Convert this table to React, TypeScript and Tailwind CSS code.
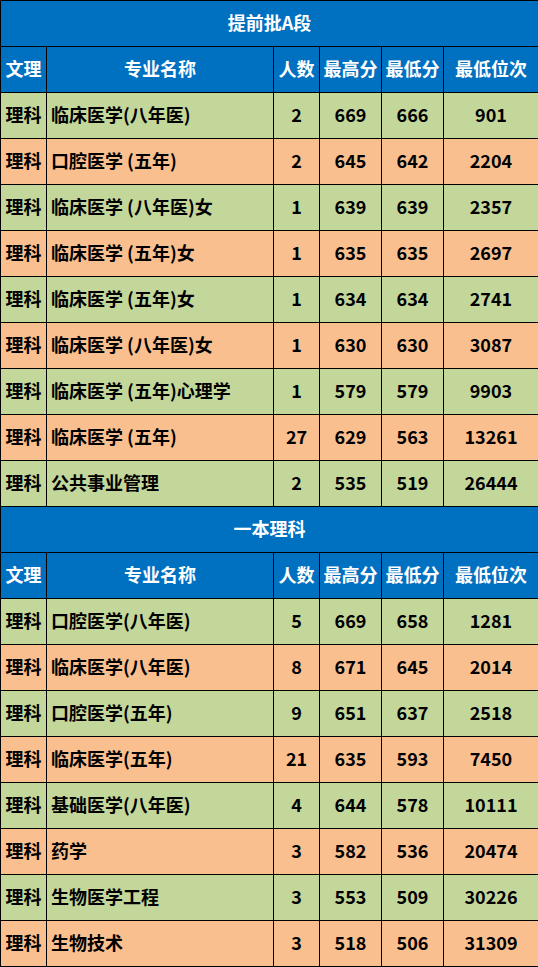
import React from "react";

type Row = [string, string, string, string, string, string];

const sections: { title: string; rows: Row[] }[] = [
  {
    title: "提前批A段",
    rows: [
      ["理科", "临床医学(八年医)", "2", "669", "666", "901"],
      ["理科", "口腔医学 (五年)", "2", "645", "642", "2204"],
      ["理科", "临床医学 (八年医)女", "1", "639", "639", "2357"],
      ["理科", "临床医学 (五年)女", "1", "635", "635", "2697"],
      ["理科", "临床医学 (五年)女", "1", "634", "634", "2741"],
      ["理科", "临床医学 (八年医)女", "1", "630", "630", "3087"],
      ["理科", "临床医学 (五年)心理学", "1", "579", "579", "9903"],
      ["理科", "临床医学 (五年)", "27", "629", "563", "13261"],
      ["理科", "公共事业管理", "2", "535", "519", "26444"],
    ],
  },
  {
    title: "一本理科",
    rows: [
      ["理科", "口腔医学(八年医)", "5", "669", "658", "1281"],
      ["理科", "临床医学(八年医)", "8", "671", "645", "2014"],
      ["理科", "口腔医学(五年)", "9", "651", "637", "2518"],
      ["理科", "临床医学(五年)", "21", "635", "593", "7450"],
      ["理科", "基础医学(八年医)", "4", "644", "578", "10111"],
      ["理科", "药学", "3", "582", "536", "20474"],
      ["理科", "生物医学工程", "3", "553", "509", "30226"],
      ["理科", "生物技术", "3", "518", "506", "31309"],
    ],
  },
];

const headers = ["文理", "专业名称", "人数", "最高分", "最低分", "最低位次"];

const grid = "grid grid-cols-[46px_227px_46px_62px_62px_95px]";
const cell = "h-[46px] border-l border-t border-black flex items-center pb-[3px]";

export default function App() {
  return (
    <div
      className="w-[538px] border-b border-black text-[18px] font-bold leading-none"
      style={{ fontFamily: '"Noto Sans CJK SC", "Noto Sans", sans-serif' }}
    >
      {sections.map((s) => (
        <div key={s.title}>
          {/* Section title */}
          <div className={`${cell} justify-center bg-[#0070c0] text-white`}>{s.title}</div>

          {/* Column headers */}
          <div className={`${grid} bg-[#0070c0] text-white`}>
            {headers.map((h) => (
              <div key={h} className={`${cell} justify-center`}>
                {h}
              </div>
            ))}
          </div>

          {/* Data rows */}
          {s.rows.map((r, i) => (
            <div
              key={i}
              className={`${grid} text-black ${i % 2 === 0 ? "bg-[#c4d79b]" : "bg-[#fabf8f]"}`}
            >
              {r.map((v, j) => (
                <div key={j} className={`${cell} ${j === 1 ? "pl-[4px]" : "justify-center"}`}>
                  {v}
                </div>
              ))}
            </div>
          ))}
        </div>
      ))}
    </div>
  );
}
